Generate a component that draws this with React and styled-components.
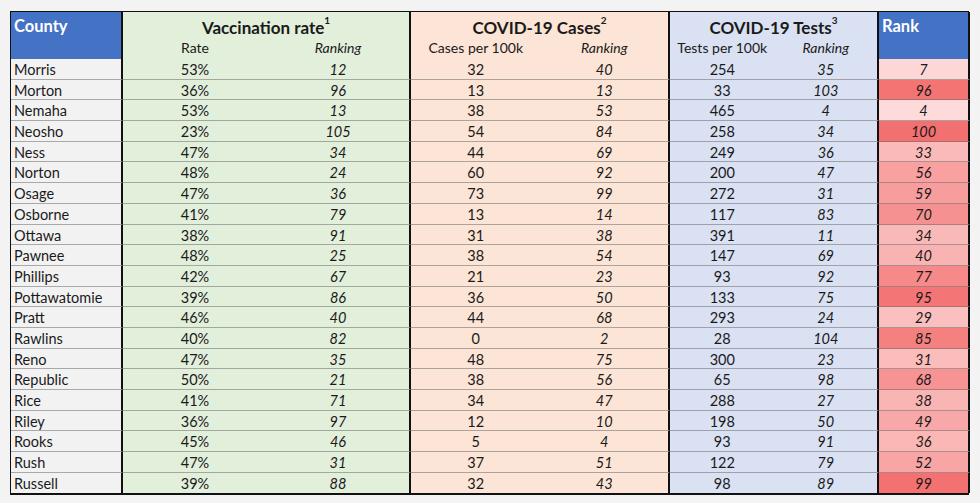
import React from 'react';
import styled, { createGlobalStyle } from 'styled-components';

const GlobalStyle = createGlobalStyle`
    body {
        margin: 0;
        background: #f3f3f3;
        font-family: Lato, "Liberation Sans", sans-serif;
    }
`

const Page = styled.div`
    padding: 11px 0 0 10px;
`

const Sheet = styled.div`
    display: grid;
    grid-template-columns: 112px 144px 144px 129.5px 129.5px 104.5px 104.5px 91px;
    grid-template-rows: 27px 20px repeat(21, 20.7px);
    width: 959px;
    border-top: 1px solid #111;
    border-left: 1px solid #111;
    border-bottom: 2px solid #111;
    box-sizing: border-box;
    color: #1a1a1a;
`

const sections = {
    county: '#f2f2f2',
    vacc: '#e2efda',
    cases: '#fce4d6',
    tests: '#d9e1f2',
}

const HeadBlue = styled.div`
    grid-row: span 2;
    background: #4472c4;
    color: #fff;
    font-weight: 700;
    font-size: 16.5px;
    padding: 4px 0 0 3px;
    border-right: 2px solid #111;
`

const GroupTitle = styled.div`
    grid-column: span 2;
    background: ${p => sections[p.$s]};
    font-weight: 700;
    font-size: 17px;
    text-align: center;
    padding-top: 5px;
    border-right: 2px solid #111;
    sup {
        font-size: 10px;
        position: relative;
        top: -3px;
    }
`

const SubLabel = styled.div`
    background: ${p => sections[p.$s]};
    font-size: 14px;
    font-style: ${p => (p.$i ? 'italic' : 'normal')};
    text-align: center;
    line-height: 17px;
    border-right: ${p => (p.$end ? '2px solid #111' : 'none')};
`

const Cell = styled.div`
    background: ${p => p.$bg || sections[p.$s]};
    font-size: 14.5px;
    font-style: ${p => (p.$i ? 'italic' : 'normal')};
    text-align: ${p => (p.$left ? 'left' : 'center')};
    padding-left: ${p => (p.$left ? '3px' : '0')};
    line-height: 21px;
    white-space: nowrap;
    border-bottom: ${p => (p.$last ? 'none' : '1px solid rgba(110,110,110,0.55)')};
    border-right: ${p => (p.$end ? '2px solid #111' : 'none')};
    box-sizing: border-box;
`

const rows = [
    ['Morris', '53%', 12, 32, 40, 254, 35, 7],
    ['Morton', '36%', 96, 13, 13, 33, 103, 96],
    ['Nemaha', '53%', 13, 38, 53, 465, 4, 4],
    ['Neosho', '23%', 105, 54, 84, 258, 34, 100],
    ['Ness', '47%', 34, 44, 69, 249, 36, 33],
    ['Norton', '48%', 24, 60, 92, 200, 47, 56],
    ['Osage', '47%', 36, 73, 99, 272, 31, 59],
    ['Osborne', '41%', 79, 13, 14, 117, 83, 70],
    ['Ottawa', '38%', 91, 31, 38, 391, 11, 34],
    ['Pawnee', '48%', 25, 38, 54, 147, 69, 40],
    ['Phillips', '42%', 67, 21, 23, 93, 92, 77],
    ['Pottawatomie', '39%', 86, 36, 50, 133, 75, 95],
    ['Pratt', '46%', 40, 44, 68, 293, 24, 29],
    ['Rawlins', '40%', 82, 0, 2, 28, 104, 85],
    ['Reno', '47%', 35, 48, 75, 300, 23, 31],
    ['Republic', '50%', 21, 38, 56, 65, 98, 68],
    ['Rice', '41%', 71, 34, 47, 288, 27, 38],
    ['Riley', '36%', 97, 12, 10, 198, 50, 49],
    ['Rooks', '45%', 46, 5, 4, 93, 91, 36],
    ['Rush', '47%', 31, 37, 51, 122, 79, 52],
    ['Russell', '39%', 88, 32, 43, 98, 89, 99],
];

// colour scale like Excel's: light pink for low ranks, red for high
function rankColor(v) {
    const t = Math.min(1, Math.max(0, (v - 1) / 104));
    const lo = [253, 222, 221];
    const hi = [243, 106, 106];
    const c = lo.map((l, i) => Math.round(l + (hi[i] - l) * t));
    return `rgb(${c.join(',')})`;
}

export default function App() {
    return (
        <Page>
            <GlobalStyle />
            <Sheet>
                <HeadBlue>County</HeadBlue>
                <GroupTitle $s="vacc">Vaccination rate<sup>1</sup></GroupTitle>
                <GroupTitle $s="cases">COVID-19 Cases<sup>2</sup></GroupTitle>
                <GroupTitle $s="tests">COVID-19 Tests<sup>3</sup></GroupTitle>
                <HeadBlue>Rank</HeadBlue>

                <SubLabel $s="vacc">Rate</SubLabel>
                <SubLabel $s="vacc" $i $end>Ranking</SubLabel>
                <SubLabel $s="cases">Cases per 100k</SubLabel>
                <SubLabel $s="cases" $i $end>Ranking</SubLabel>
                <SubLabel $s="tests">Tests per 100k</SubLabel>
                <SubLabel $s="tests" $i $end>Ranking</SubLabel>

                {rows.map((r, idx) => {
                    const last = idx === rows.length - 1;
                    return (
                        <React.Fragment key={r[0]}>
                            <Cell $s="county" $left $end $last={last}>{r[0]}</Cell>
                            <Cell $s="vacc" $last={last}>{r[1]}</Cell>
                            <Cell $s="vacc" $i $end $last={last}>{r[2]}</Cell>
                            <Cell $s="cases" $last={last}>{r[3]}</Cell>
                            <Cell $s="cases" $i $end $last={last}>{r[4]}</Cell>
                            <Cell $s="tests" $last={last}>{r[5]}</Cell>
                            <Cell $s="tests" $i $end $last={last}>{r[6]}</Cell>
                            <Cell $bg={rankColor(r[7])} $i $end $last={last}>{r[7]}</Cell>
                        </React.Fragment>
                    );
                })}
            </Sheet>
        </Page>
    );
}
